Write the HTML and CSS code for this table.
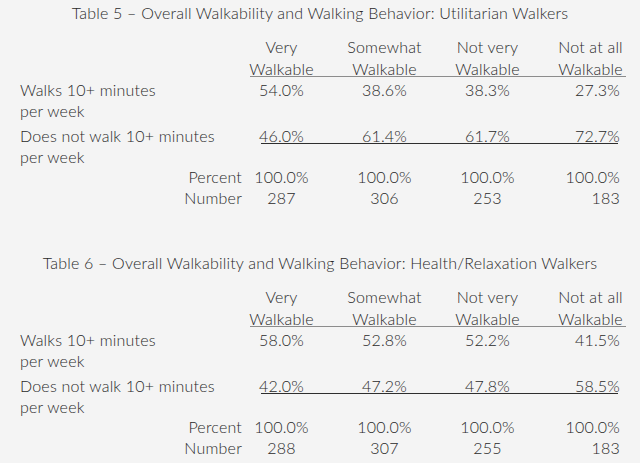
FILE: index.html
```html
<!DOCTYPE html>
<html lang="en">
<head>
<meta charset="utf-8">
<title>Walkability Tables</title>
<link rel="stylesheet" href="styles.css">
</head>
<body>
<main class="page">
  <section class="tbl">
    <h2 class="title">Table 5 – Overall Walkability and Walking Behavior: Utilitarian Walkers</h2>
    <div class="head">
      <div class="hcols">
        <div class="hc">Very<br>Walkable</div>
        <div class="hc">Somewhat<br>Walkable</div>
        <div class="hc">Not very<br>Walkable</div>
        <div class="hc">Not at all<br>Walkable</div>
      </div>
    </div>
    <div class="row">
      <div class="label">Walks 10+ minutes<br>per week</div>
      <div class="vals">
        <span class="v">54.0%</span><span class="v">38.6%</span><span class="v">38.3%</span><span class="v">27.3%</span>
      </div>
    </div>
    <div class="row row-second">
      <div class="label">Does not walk 10+ minutes<br>per week</div>
      <div class="vals vals-ruled">
        <span class="v">46.0%</span><span class="v">61.4%</span><span class="v">61.7%</span><span class="v">72.7%</span>
      </div>
    </div>
    <div class="row row-total">
      <div class="label label-total">Percent</div>
      <div class="vals">
        <span class="v">100.0%</span><span class="v">100.0%</span><span class="v">100.0%</span><span class="v">100.0%</span>
      </div>
    </div>
    <div class="row row-total">
      <div class="label label-total">Number</div>
      <div class="vals">
        <span class="v">287</span><span class="v">306</span><span class="v">253</span><span class="v">183</span>
      </div>
    </div>
  </section>

  <section class="tbl">
    <h2 class="title">Table 6 – Overall Walkability and Walking Behavior: Health/Relaxation Walkers</h2>
    <div class="head">
      <div class="hcols">
        <div class="hc">Very<br>Walkable</div>
        <div class="hc">Somewhat<br>Walkable</div>
        <div class="hc">Not very<br>Walkable</div>
        <div class="hc">Not at all<br>Walkable</div>
      </div>
    </div>
    <div class="row">
      <div class="label">Walks 10+ minutes<br>per week</div>
      <div class="vals">
        <span class="v">58.0%</span><span class="v">52.8%</span><span class="v">52.2%</span><span class="v">41.5%</span>
      </div>
    </div>
    <div class="row row-second">
      <div class="label">Does not walk 10+ minutes<br>per week</div>
      <div class="vals vals-ruled">
        <span class="v">42.0%</span><span class="v">47.2%</span><span class="v">47.8%</span><span class="v">58.5%</span>
      </div>
    </div>
    <div class="row row-total">
      <div class="label label-total">Percent</div>
      <div class="vals">
        <span class="v">100.0%</span><span class="v">100.0%</span><span class="v">100.0%</span><span class="v">100.0%</span>
      </div>
    </div>
    <div class="row row-total">
      <div class="label label-total">Number</div>
      <div class="vals">
        <span class="v">288</span><span class="v">307</span><span class="v">255</span><span class="v">183</span>
      </div>
    </div>
  </section>
</main>
</body>
</html>
```

FILE: styles.css
```css
html, body {
  margin: 0;
  padding: 0;
  background: #f4f4f4;
  overflow: hidden;
}

.page {
  width: 640px;
  padding-top: 2px;
  font-family: Lato, "Open Sans", "Liberation Sans", sans-serif;
  font-size: 16px;
  font-weight: 300;
  letter-spacing: 0.2px;
  color: #2a2a2a;
}

.tbl + .tbl {
  margin-top: 44px;
}

.title {
  margin: 0;
  font-size: 16px;
  font-weight: 300;
  line-height: 21px;
  text-align: center;
}

.head,
.row {
  display: grid;
  grid-template-columns: 210px repeat(4, 103px);
  padding-left: 20px;
}

.head {
  margin-top: 13px;
  line-height: 22px;
}

.hcols {
  grid-column: 2 / 6;
  display: grid;
  grid-template-columns: repeat(4, 103px);
  text-align: center;
  background: linear-gradient(#8c8c8c, #8c8c8c) no-repeat 20px 40px / 376px 1px;
}

.row {
  line-height: 20.5px;
}

.row-second {
  margin-top: 5px;
}

.label {
  white-space: nowrap;
}

.label-total {
  text-align: right;
  margin-right: -12px;
}

.vals {
  grid-column: 2 / 6;
  display: grid;
  grid-template-columns: repeat(4, 103px);
  align-self: start;
  text-align: center;
}

.vals .v:last-child {
  text-align: right;
  padding-right: 22px;
}

.vals-ruled {
  background: linear-gradient(#2e2e2e, #2e2e2e) no-repeat 31px 17px / 357px 1px;
}
```
